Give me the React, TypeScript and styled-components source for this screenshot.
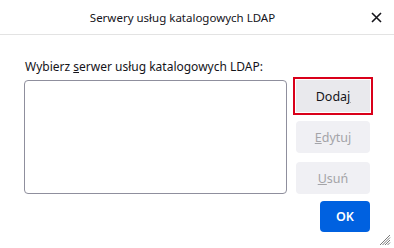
import React from 'react';
import styled, { createGlobalStyle, css } from 'styled-components';

const GlobalStyle = createGlobalStyle`
  html, body {
    margin: 0;
    padding: 0;
    background: #ffffff;
  }
  body {
    font-family: "Noto Sans", "Liberation Sans", sans-serif;
    color: #15141a;
  }
`;

const Dialog = styled.div`
  position: relative;
  width: 394px;
  height: 248px;
  background: #ffffff;
  display: flex;
  flex-direction: column;
`;

const TitleBar = styled.div`
  display: flex;
  align-items: center;
  height: 35px;
  border-bottom: 1px solid #e3e3e3;
  box-sizing: border-box;
`;

const Title = styled.div`
  flex: 1;
  text-align: center;
  font-size: 11.5px;
  line-height: 16px;
  padding-left: 4px;
  margin-top: 1px;
`;

const CloseButton = styled.button`
  width: 30px;
  height: 30px;
  margin-right: 3px;
  border: none;
  background: transparent;
  display: flex;
  align-items: center;
  justify-content: center;
  padding: 0;
  margin-top: 1px;
`;

const Content = styled.div`
  padding: 23px 24px 0 24px;
  display: flex;
  flex-direction: column;
`;

const Label = styled.div`
  font-size: 12px;
  line-height: 18px;
  padding-left: 1px;
  margin-bottom: 4px;
`;

const Row = styled.div`
  display: flex;
  gap: 9px;
`;

const ListBox = styled.div`
  width: 263px;
  height: 114px;
  box-sizing: border-box;
  border: 1px solid #8f8f9d;
  border-radius: 4px;
  background: #ffffff;
`;

const ButtonColumn = styled.div`
  display: flex;
  flex-direction: column;
  gap: 9px;
`;

const ActionButton = styled.button<{ disabled?: boolean; focused?: boolean }>`
  width: 74px;
  height: 32px;
  border: none;
  border-radius: 4px;
  background: #e9e9ed;
  color: #15141a;
  font-family: "Noto Sans", "Liberation Sans", sans-serif;
  font-size: 12.5px;
  padding: 0;
  ${({ focused }) =>
    focused &&
    css`
      outline: 2px solid #d9001a;
      outline-offset: 1px;
      border-radius: 0;
    `}
  ${({ disabled }) =>
    disabled &&
    css`
      background: #f0f0f4;
      color: #a4a4a8;
    `}
`;

const Footer = styled.div`
  display: flex;
  justify-content: flex-end;
  margin-top: 7px;
`;

const PrimaryButton = styled.button`
  width: 50px;
  height: 31px;
  border: none;
  border-radius: 4px;
  background: #0061e0;
  color: #ffffff;
  font-family: "Noto Sans", "Liberation Sans", sans-serif;
  font-size: 12.5px;
  font-weight: 600;
  padding: 0;
`;

const Grip = styled.svg`
  position: absolute;
  right: 3px;
  bottom: 2px;
`;

export default function App() {
  return (
    <>
      <GlobalStyle />
      <Dialog>
        <TitleBar>
          <Title>Serwery usług katalogowych LDAP</Title>
          <CloseButton aria-label="Zamknij">
            <svg width="11" height="11" viewBox="0 0 11 11">
              <path d="M1 1 L10 10 M10 1 L1 10" stroke="#15141a" strokeWidth="1.6" />
            </svg>
          </CloseButton>
        </TitleBar>
        <Content>
          <Label>
            Wybierz <u>s</u>erwer usług katalogowych LDAP:
          </Label>
          <Row>
            <ListBox />
            <ButtonColumn>
              <ActionButton focused>
                Doda<u>j</u>
              </ActionButton>
              <ActionButton disabled>
                <u>E</u>dytuj
              </ActionButton>
              <ActionButton disabled>
                <u>U</u>suń
              </ActionButton>
            </ButtonColumn>
          </Row>
          <Footer>
            <PrimaryButton>OK</PrimaryButton>
          </Footer>
        </Content>
        <Grip width="13" height="13" viewBox="0 0 13 13">
          <path
            d="M12 2 L2 12 M12 4.5 L4.5 12 M12 7 L7 12 M12 9.5 L9.5 12"
            stroke="#7a7a7a"
            strokeWidth="1"
          />
        </Grip>
      </Dialog>
    </>
  );
}
